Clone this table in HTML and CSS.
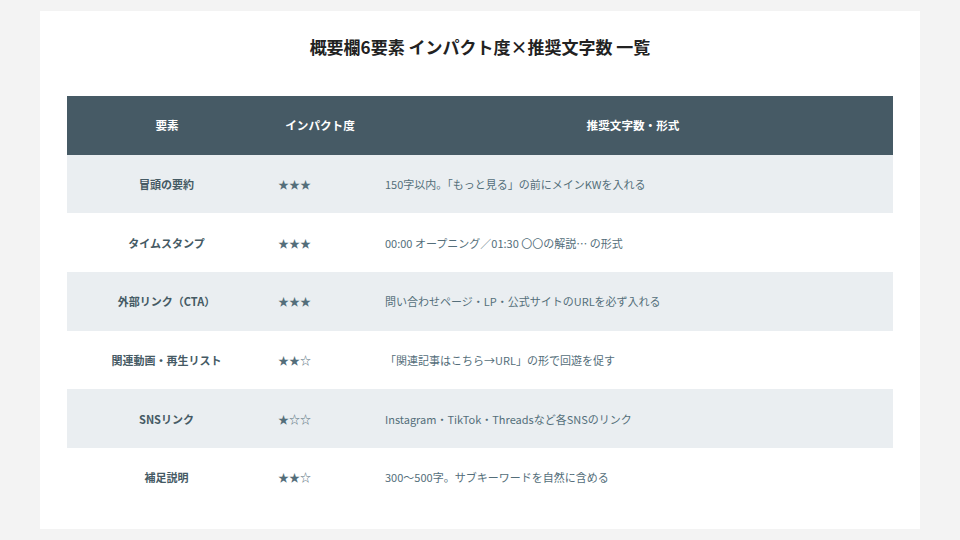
FILE: index.html
```html
<!DOCTYPE html>
<html lang="ja">
<head>
<meta charset="utf-8">
<link rel="stylesheet" href="styles.css">
</head>
<body>
<div class="page">
  <div class="card">
    <h1 class="title">概要欄6要素 インパクト度×推奨文字数 一覧</h1>
    <table class="tbl">
      <colgroup>
        <col class="c1"><col class="c2"><col class="c3">
      </colgroup>
      <thead>
        <tr><th>要素</th><th>インパクト度</th><th>推奨文字数・形式</th></tr>
      </thead>
      <tbody>
        <tr class="alt"><td class="name">冒頭の要約</td><td class="stars">★★★</td><td class="desc">150字以内。「もっと見る」の前にメインKWを入れる</td></tr>
        <tr><td class="name">タイムスタンプ</td><td class="stars">★★★</td><td class="desc">00:00 オープニング／01:30 〇〇の解説… の形式</td></tr>
        <tr class="alt"><td class="name">外部リンク（CTA）</td><td class="stars">★★★</td><td class="desc">問い合わせページ・LP・公式サイトのURLを必ず入れる</td></tr>
        <tr><td class="name">関連動画・再生リスト</td><td class="stars">★★☆</td><td class="desc">「関連記事はこちら→URL」の形で回遊を促す</td></tr>
        <tr class="alt"><td class="name">SNSリンク</td><td class="stars">★☆☆</td><td class="desc">Instagram・TikTok・Threadsなど各SNSのリンク</td></tr>
        <tr><td class="name">補足説明</td><td class="stars">★★☆</td><td class="desc">300〜500字。サブキーワードを自然に含める</td></tr>
      </tbody>
    </table>
  </div>
</div>
</body>
</html>
```

FILE: styles.css
```css
html, body {
  margin: 0;
  padding: 0;
  background: #f3f3f3;
  font-family: "Noto Sans CJK JP", "Noto Sans", sans-serif;
}
.page {
  padding: 11px 40px;
}
.card {
  background: #ffffff;
  padding: 24px 27px 22px;
}
.title {
  margin: 0 0 37px;
  font-size: 17px;
  line-height: 24px;
  font-weight: 700;
  text-align: center;
  color: #222222;
}
.tbl {
  width: 100%;
  border-collapse: collapse;
  table-layout: fixed;
  font-size: 11px;
}
.c1 { width: 200px; }
.c2 { width: 106px; }
.tbl tr {
  height: 58.7px;
}
.tbl th {
  background: #465a65;
  color: #ffffff;
  font-size: 11.6px;
  font-weight: 700;
  text-align: center;
  padding: 0 12px;
}
.tbl td {
  padding: 0 12px 0 11px;
  color: #546e7a;
  vertical-align: middle;
}
.tbl tr.alt td {
  background: #eaeef1;
}
.tbl td.name {
  text-align: center;
  font-weight: 700;
  color: #455a64;
}
.tbl td.stars {
  text-align: left;
  color: #546e7a;
}
.tbl td.desc {
  text-align: left;
  padding-left: 12px;
}
```
